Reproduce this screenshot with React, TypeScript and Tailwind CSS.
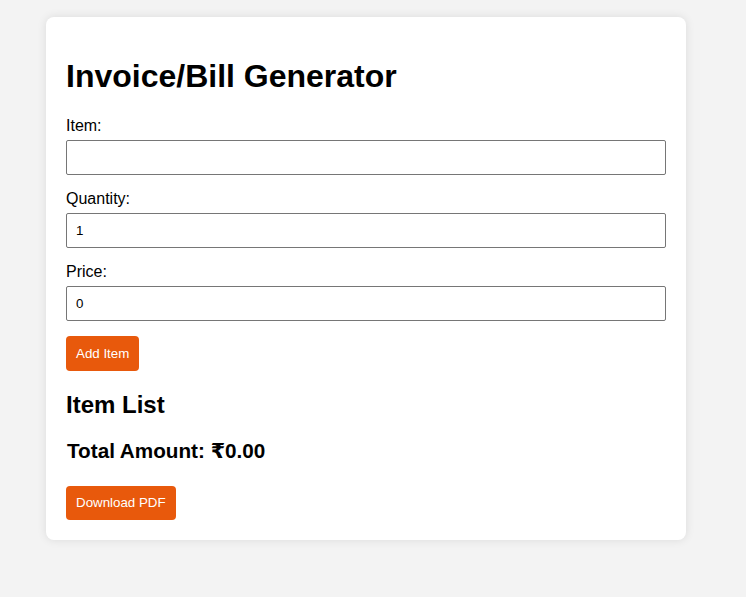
import { useState } from "react";

interface LineItem {
  name: string;
  quantity: number;
  price: number;
}

const App = () => {
  const [item, setItem] = useState("");
  const [quantity, setQuantity] = useState("1");
  const [price, setPrice] = useState("0");
  const [items, setItems] = useState<LineItem[]>([]);

  const addItem = () => {
    if (!item) return;
    setItems((prev) => [
      ...prev,
      { name: item, quantity: Number(quantity), price: Number(price) },
    ]);
    setItem("");
    setQuantity("1");
    setPrice("0");
  };

  const total = items.reduce((acc, i) => acc + i.quantity * i.price, 0);

  return (
    <div className="min-h-[597px] bg-[#f3f3f3] pt-[17px] pl-[46px] font-['Liberation_Sans','DejaVu_Sans',Arial,sans-serif] text-black">
      <div className="w-[640px] rounded-[8px] bg-white px-[20px] pt-[20px] pb-[20px] shadow-[0_0_10px_rgba(0,0,0,0.1)]">
        <h1 className="mt-[21px] mb-[21px] text-[32px] leading-[37px] font-bold">
          Invoice/Bill Generator
        </h1>

        <label className="mb-[5px] block text-[16px] leading-[19px]">Item:</label>
        <input
          type="text"
          value={item}
          onChange={(e) => setItem(e.target.value)}
          className="mb-[14px] block h-[35px] w-full rounded-[2px] border border-[#767676] px-[9px] text-[13.33px]"
        />

        <label className="mb-[5px] block text-[16px] leading-[19px]">Quantity:</label>
        <input
          type="number"
          value={quantity}
          onChange={(e) => setQuantity(e.target.value)}
          className="mb-[14px] block h-[35px] w-full rounded-[2px] border border-[#767676] px-[9px] text-[13.33px]"
        />

        <label className="mb-[5px] block text-[16px] leading-[19px]">Price:</label>
        <input
          type="number"
          value={price}
          onChange={(e) => setPrice(e.target.value)}
          className="mb-[15px] block h-[35px] w-full rounded-[2px] border border-[#767676] px-[9px] text-[13.33px]"
        />

        <button
          onClick={addItem}
          className="block h-[35px] rounded-[4px] bg-[#e8590c] px-[10px] text-[13.33px] text-white"
        >
          Add Item
        </button>

        <h2 className="mt-[20px] mb-[20px] text-[24px] leading-[28px] font-bold">Item List</h2>
        {items.length > 0 && (
          <ul className="mb-[10px] text-[14px]">
            {items.map((i, idx) => (
              <li key={idx}>
                {i.name} x {i.quantity} = ₹{(i.quantity * i.price).toFixed(2)}
              </li>
            ))}
          </ul>
        )}

        <h3 className="mb-[23px] pl-px text-[20.7px] leading-[24px] font-bold">
          Total Amount: ₹{total.toFixed(2)}
        </h3>

        <button className="block h-[34px] rounded-[4px] bg-[#e8590c] px-[10px] text-[13.33px] text-white">
          Download PDF
        </button>
      </div>
    </div>
  );
};

export default App;
